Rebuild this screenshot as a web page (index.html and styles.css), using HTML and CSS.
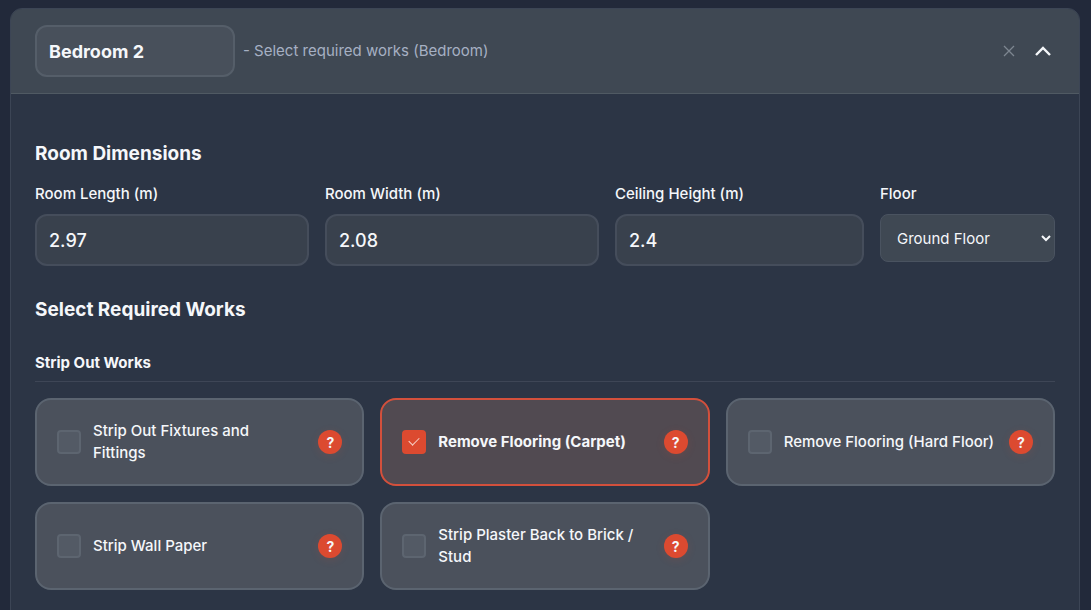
FILE: index.html
```
<!DOCTYPE html>
<html lang="en">
<head>
    <meta charset="UTF-8">
    <meta name="viewport" content="width=device-width, initial-scale=1.0">
    <title>Room Works</title>
    <link rel="stylesheet" href="styles.css">
</head>
<body>
    <section class="room-card">
        <!-- Room header -->
        <header class="room-header">
            <input type="text" class="room-name" value="Bedroom 2" aria-label="Room name">
            <span class="room-hint">- Select required works (Bedroom)</span>
            <button type="button" class="icon-btn remove-btn" aria-label="Remove room">
                <svg width="12" height="12" viewBox="0 0 12 12"><path d="M1 1l10 10M11 1L1 11"/></svg>
            </button>
            <button type="button" class="icon-btn toggle-btn" aria-label="Collapse room">
                <svg width="18" height="12" viewBox="0 0 18 12"><path d="M2 10l7-7 7 7"/></svg>
            </button>
        </header>

        <div class="room-body">
            <!-- Dimensions -->
            <h2>Room Dimensions</h2>
            <div class="dimensions">
                <div class="field">
                    <label for="length">Room Length (m)</label>
                    <input type="text" inputmode="decimal" id="length" value="2.97">
                </div>
                <div class="field">
                    <label for="width">Room Width (m)</label>
                    <input type="text" inputmode="decimal" id="width" value="2.08">
                </div>
                <div class="field">
                    <label for="height">Ceiling Height (m)</label>
                    <input type="text" inputmode="decimal" id="height" value="2.4">
                </div>
                <div class="field">
                    <label for="floor">Floor</label>
                    <select id="floor">
                        <option>Ground Floor</option>
                    </select>
                </div>
            </div>

            <!-- Works -->
            <h2>Select Required Works</h2>
            <h3>Strip Out Works</h3>
            <div class="works">
                <div class="work">
                    <input type="checkbox" id="fixtures">
                    <label for="fixtures">Strip Out Fixtures and<br>Fittings</label>
                    <button type="button" class="help-btn">?</button>
                </div>
                <div class="work selected">
                    <input type="checkbox" id="carpet" checked>
                    <label for="carpet">Remove Flooring (Carpet)</label>
                    <button type="button" class="help-btn">?</button>
                </div>
                <div class="work">
                    <input type="checkbox" id="hard-floor">
                    <label for="hard-floor">Remove Flooring (Hard Floor)</label>
                    <button type="button" class="help-btn">?</button>
                </div>
                <div class="work">
                    <input type="checkbox" id="wall-paper">
                    <label for="wall-paper">Strip Wall Paper</label>
                    <button type="button" class="help-btn">?</button>
                </div>
                <div class="work">
                    <input type="checkbox" id="plaster">
                    <label for="plaster">Strip Plaster Back to Brick / Stud</label>
                    <button type="button" class="help-btn">?</button>
                </div>
            </div>
        </div>
    </section>
</body>
</html>
```
FILE: styles.css
```
* {
    box-sizing: border-box;
}

body {
    margin: 0;
    padding: 8px 11px 0 10px;
    background-color: #22293a;
    color: #f5f7fa;
    font-family: Inter, "Liberation Sans", sans-serif;
    font-size: 15px;
    line-height: 24px;
}

input, select, button {
    font-family: inherit;
    color: inherit;
}

.room-card {
    border: 1px solid #3c4555;
    border-radius: 12px;
    background-color: #2c3545;
    overflow: hidden;
}

/* Header */
.room-header {
    display: flex;
    align-items: center;
    padding: 16px 24px;
    background-color: #3f4853;
    border-bottom: 1px solid #505a63;
}

.room-name {
    width: 200px;
    height: 52px;
    padding: 0 12px;
    border: 2px solid #555e69;
    border-radius: 12px;
    background-color: #48505b;
    font-size: 18px;
    font-weight: 700;
}

.room-hint {
    flex: 1;
    margin-left: 8px;
    color: #a6b0c3;
}

.icon-btn {
    display: flex;
    align-items: center;
    justify-content: center;
    width: 24px;
    height: 24px;
    padding: 0;
    border: none;
    background: none;
    cursor: pointer;
}

.icon-btn svg {
    fill: none;
    stroke: currentColor;
}

.remove-btn {
    margin-right: 10px;
    color: #7d8691;
}

.remove-btn svg {
    stroke-width: 1.3;
}

.toggle-btn svg {
    stroke-width: 2.4;
}

/* Body */
.room-body {
    padding: 48px 24px 32px;
}

h2 {
    margin: 0 0 16px;
    font-size: 19px;
    font-weight: 700;
}

h3 {
    margin: 28px 0 16px;
    padding-bottom: 5px;
    border-bottom: 1px solid #3e4656;
    font-size: 15px;
    font-weight: 700;
    line-height: 26px;
}

.dimensions {
    display: grid;
    grid-template-columns: 11fr 11fr 10fr 175px;
    gap: 16px;
    margin-bottom: 32px;
}

.field {
    display: flex;
    flex-direction: column;
    gap: 8px;
}

.field label {
    font-weight: 500;
}

.field input {
    width: 100%;
    height: 52px;
    padding: 0 12px;
    border: 2px solid #454d5b;
    border-radius: 12px;
    background-color: #39414d;
    font-size: 18px;
    font-weight: 500;
}

.field select {
    height: 48px;
    padding: 0 0 0 12px;
    border: 1px solid #4a5360;
    border-radius: 8px;
    background-color: #3f4853;
    font-size: 15px;
}

/* Work options */
.works {
    display: grid;
    grid-template-columns: repeat(3, 1fr);
    gap: 16px;
}

.work {
    display: flex;
    align-items: center;
    gap: 12px;
    min-height: 88px;
    padding: 20px;
    border: 2px solid #5b6470;
    border-radius: 16px;
    background-color: #4b515c;
}

.work label {
    flex: 1;
    font-weight: 500;
    line-height: 22px;
}

.work input {
    appearance: none;
    flex: none;
    display: grid;
    place-items: center;
    width: 24px;
    height: 24px;
    margin: 0;
    border: 2px solid #5d6570;
    border-radius: 4px;
    background-color: #535a65;
}

.work.selected {
    border-color: #d3503c;
    background-color: #514a51;
}

.work.selected label {
    font-weight: 700;
}

.work input:checked {
    border-color: #dc4a30;
    background-color: #dc4a30;
}

.work input:checked::after {
    content: "";
    width: 9px;
    height: 5px;
    margin-bottom: 4px;
    border: solid #f6cfc6;
    border-width: 0 0 1px 1px;
    transform: rotate(-45deg);
}

.help-btn {
    flex: none;
    width: 24px;
    height: 24px;
    padding: 0;
    border: none;
    border-radius: 50%;
    background-color: #dc4a30;
    box-shadow: 0 2px 8px rgba(220, 74, 48, 0.15);
    font-size: 14px;
    font-weight: 700;
    cursor: pointer;
}
```
